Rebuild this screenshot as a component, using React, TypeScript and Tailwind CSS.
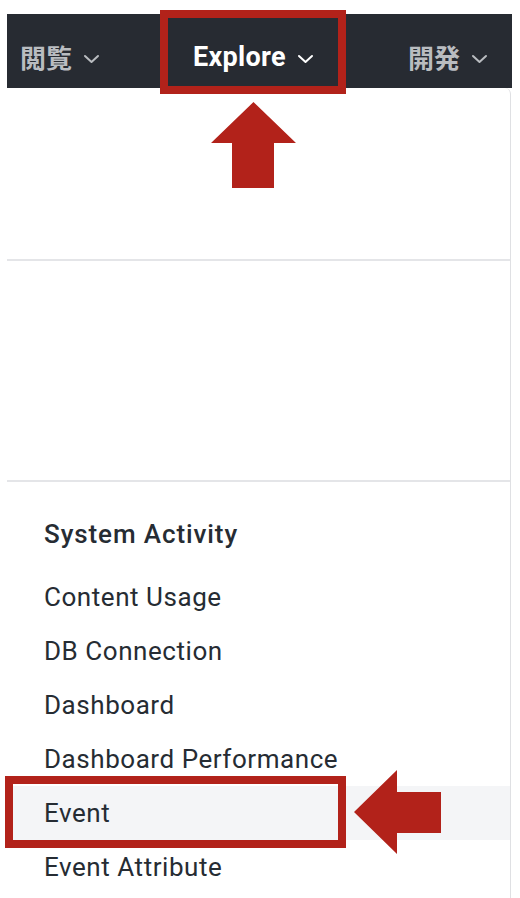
import React from "react";

const Chevron = ({ color }: { color: string }) => (
  <svg width="17" height="10" viewBox="0 0 17 10" className="ml-[11px] mt-[4px]">
    <polyline points="2,2 8.5,8 15,2" fill="none" stroke={color} strokeWidth="2" strokeLinecap="round" strokeLinejoin="round" />
  </svg>
);

const items = [
  "Content Usage",
  "DB Connection",
  "Dashboard",
  "Dashboard Performance",
  "Event",
  "Event Attribute",
];

export default function App() {
  return (
    <div
      className="relative w-[520px] h-[898px] bg-white overflow-hidden"
      style={{ fontFamily: "Roboto, 'Noto Sans CJK JP', sans-serif" }}
    >
      <div className="mt-[14px] ml-[7px] w-[505px] h-[74px] bg-[#272b32] flex items-center pt-[12px] text-[26px] leading-none">
        <div className="flex items-center ml-[13px] w-[160px] text-[#b9bcc0] font-bold" style={{ fontFamily: "'Noto Sans CJK JP', sans-serif" }}>
          <span>閲覧</span>
          <Chevron color="#b9bcc0" />
        </div>
        <div className="flex items-center ml-[13px] w-[215px] text-white font-bold text-[27px] tracking-[0.3px]">
          <span>Explore</span>
          <Chevron color="#ffffff" />
        </div>
        <div className="flex items-center text-[#b9bcc0] font-bold" style={{ fontFamily: "'Noto Sans CJK JP', sans-serif" }}>
          <span>開発</span>
          <Chevron color="#b9bcc0" />
        </div>
      </div>
      <div className="ml-[7px] w-[504px] h-[810px] bg-white border-r border-[#dfe0e3] rounded-tr-[6px] flex flex-col">
        <div className="h-[173px] border-b-2 border-[#e4e5e8]" />
        <div className="h-[221px] border-b-2 border-[#e4e5e8]" />
        <div className="flex flex-col text-[#262c33]">
          <div className="h-[88px] pt-[36px] pl-[37px] text-[26px] leading-[32px] font-medium tracking-[0.9px]">
            System Activity
          </div>
          {items.map((t) => (
            <div
              key={t}
              className={
                "h-[54px] flex items-center pl-[37px] text-[26px] tracking-[0.55px] " +
                (t === "Event" ? "bg-[#f4f5f7]" : "")
              }
            >
              {t}
            </div>
          ))}
        </div>
      </div>

      <div className="absolute left-[160px] top-[10px] w-[186px] h-[84px] border-[8px] border-[#b2221a]" />
      <div className="absolute left-[5px] top-[776px] w-[341px] h-[72px] border-[8px] border-[#b2221a]" />

      <svg className="absolute left-[211px] top-[102px]" width="85" height="86" viewBox="0 0 85 86">
        <polygon points="42.5,0 85,41 63,41 63,86 21,86 21,41 0,41" fill="#b2221a" />
      </svg>
      <svg className="absolute left-[354px] top-[770px]" width="87" height="84" viewBox="0 0 87 84">
        <polygon points="0,42 43,0 43,22 87,22 87,63 43,63 43,84" fill="#b2221a" />
      </svg>
    </div>
  );
}
